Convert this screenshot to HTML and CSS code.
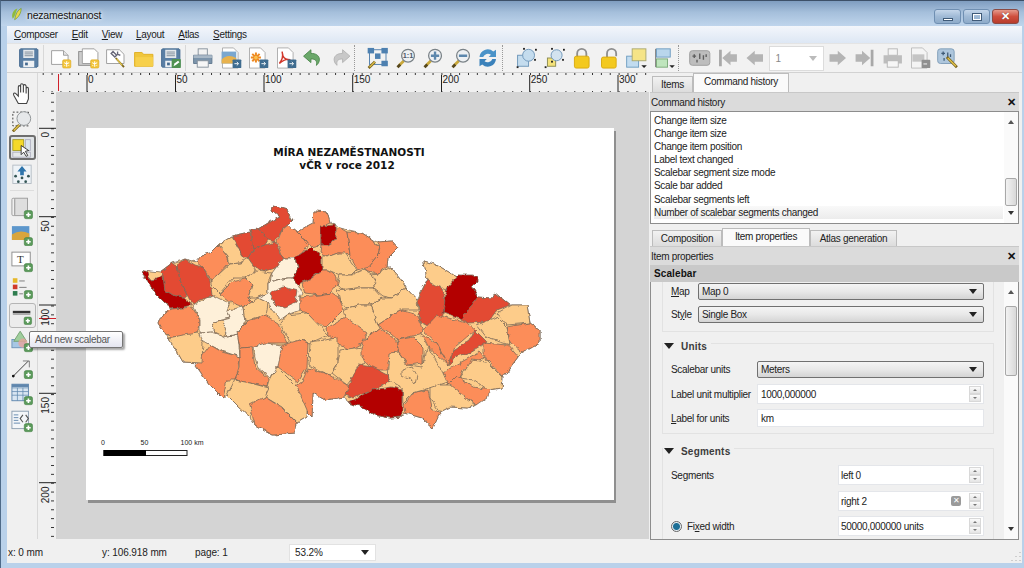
FILE: index.html
```html
<!DOCTYPE html>
<html lang="en">
<head>
<meta charset="utf-8">
<title>nezamestnanost</title>
<link rel="stylesheet" href="styles.css">
</head>
<body>
<svg class="defs" width="0" height="0">
<defs>
<filter id="wig" x="-5%" y="-5%" width="110%" height="110%" color-interpolation-filters="sRGB"><feTurbulence type="fractalNoise" baseFrequency=".16" numOctaves="2" seed="4"/><feDisplacementMap in="SourceGraphic" scale="4.500" xChannelSelector="R" yChannelSelector="G"/></filter>
<g id="badge"><rect x="14" y="14" width="9" height="9" rx="1.5" fill="#f3c53b" stroke="#d8a520" stroke-width=".6"/><path d="M18.5 15.5v6M15.8 17l5.4 3M21.2 17l-5.4 3" stroke="#fff" stroke-width="1.1"/></g>
<g id="plus"><rect x="14.5" y="14.5" width="9" height="9" rx="2" fill="#5b9a5b" stroke="#3f7c3f" stroke-width=".6"/><path d="M19 16.5v5M16.5 19h5" stroke="#fff" stroke-width="1.8"/></g>
<g id="exp"><rect x="14" y="13.5" width="9.5" height="9.5" rx="1" fill="#3f6c8f"/><path d="M16 18.2h4M18.6 16.3l2 1.9-2 1.9" fill="none" stroke="#fff" stroke-width="1"/></g>
<g id="lens"><path d="M5 20 10 15" stroke="#c9a83a" stroke-width="3"/><path d="M3 22 6 19" stroke="#56471b" stroke-width="3"/><circle cx="14.5" cy="9.5" r="7" fill="#eef1f4" stroke="#7b8388" stroke-width="1.4"/></g>
<symbol id="i-save" viewBox="0 0 24 24"><path d="M3 2h18l1 1v18l-1 1H3l-1-1V3z" fill="#5a7fa5" stroke="#456a90"/><rect x="6" y="3" width="12" height="9" fill="#e4e8ec"/><path d="M7.5 5.5h9M7.5 7.5h9M7.5 9.5h9" stroke="#7d8b99"/><rect x="6" y="15" width="12" height="7" fill="#eef1f4"/><rect x="8" y="17" width="3" height="3" fill="#456a90"/></symbol>
<symbol id="i-new" viewBox="0 0 24 24"><path d="M2 4h13l5 5v10H2z" fill="#fff" stroke="#9a9a9a"/><path d="M15 4v5h5" fill="#e4e4e4" stroke="#9a9a9a"/><use href="#badge"/></symbol>
<symbol id="i-dup" viewBox="0 0 24 24"><rect x="1" y="5" width="15" height="15" fill="#ccc" stroke="#8a8a8a"/><path d="M5 2h13l4 4v12H5z" fill="#fff" stroke="#9a9a9a"/><use href="#badge"/></symbol>
<symbol id="i-man" viewBox="0 0 24 24"><path d="M2 3h14l5 5v10H2z" fill="#fff" stroke="#9a9a9a"/><path d="M9 5l4 4-2 2-4-4zM14 5v3l3 1" fill="none" stroke="#667" stroke-width="1.5"/><path d="M12 12l9 10" stroke="#7a6420" stroke-width="2"/><path d="M13 13l6 7" stroke="#e4c64a" stroke-width="1.4"/></symbol>
<symbol id="i-open" viewBox="0 0 24 24"><path d="M2 6h8l2 2h10v13H2z" fill="#f0c63c" stroke="#e0ae20"/><rect x="3" y="11" width="19" height="10" fill="#f7d04b"/></symbol>
<symbol id="i-saveas" viewBox="0 0 24 24"><use href="#i-save" width="24" height="24"/><rect x="13" y="13" width="10" height="10" rx="1" fill="#4f9150"/><path d="M15 21l1-3 4-3 1.5 1.5-4 3z" fill="#fff"/></symbol>
<symbol id="i-print" viewBox="0 0 24 24"><rect x="7" y="2" width="10" height="7" fill="#f2f2f2" stroke="#85909b"/><path d="M2 9h20v9H2z" fill="#7c94ab" stroke="#60788f"/><rect x="2" y="9" width="20" height="3" fill="#a9b8c6"/><rect x="6" y="15" width="12" height="7" fill="#f6f6f6" stroke="#85909b"/></symbol>
<symbol id="i-img" viewBox="0 0 24 24"><path d="M3 1h12l5 5v17H3z" fill="#fff" stroke="#aaa"/><rect x="2" y="5" width="16" height="13" fill="#7aa7cf"/><path d="M2 14q6-7 16-2v6H2z" fill="#e8b24d"/><use href="#exp"/></symbol>
<symbol id="i-svg" viewBox="0 0 24 24"><path d="M3 1h12l5 5v17H3z" fill="#fff" stroke="#aaa"/><g stroke="#ee8a22" stroke-width="2.2"><path d="M10 6v11M4.500 11.500h11M6 7.500l8 8M14 7.500l-8 8"/></g><circle cx="10" cy="11.500" r="2" fill="#f9c04d"/><use href="#exp"/></symbol>
<symbol id="i-pdf" viewBox="0 0 24 24"><path d="M3 1h12l5 5v17H3z" fill="#fff" stroke="#aaa"/><path d="M8 5q2 7-3 13 7-6 12-4-6 0-8-4z" fill="none" stroke="#d1382c" stroke-width="1.6"/><use href="#exp"/></symbol>
<symbol id="i-undo" viewBox="0 0 24 24"><path d="M10 3 2 10l8 7v-4c5 0 7 2 6 7 5-4 5-13-6-13z" fill="#6ba86a" stroke="#4c884c"/></symbol>
<symbol id="i-redo" viewBox="0 0 24 24"><path d="M14 3l8 7-8 7v-4c-5 0-7 2-6 7-5-4-5-13 6-13z" fill="#c8c8c8" stroke="#b4b4b4"/></symbol>
<symbol id="i-zfull" viewBox="0 0 24 24"><rect x="3" y="3" width="18" height="16" fill="none" stroke="#4c7cab" stroke-width="1"/><g fill="#4d80b0"><rect x="1" y="1" width="7" height="6"/><rect x="16" y="1" width="7" height="6"/><rect x="16" y="15" width="7" height="6"/><rect x="9" y="7" width="6" height="6"/></g><path d="M2 23l7-7" stroke="#7a6420" stroke-width="3"/><path d="M3 22l6-6" stroke="#e4c64a" stroke-width="1.4"/></symbol>
<symbol id="i-z11" viewBox="0 0 24 24"><use href="#lens"/><text x="14.500" y="12.500" class="ztext">1:1</text></symbol>
<symbol id="i-zin" viewBox="0 0 24 24"><use href="#lens"/><path d="M14.500 5v9M10 9.500h9" stroke="#5c87ad" stroke-width="2.600"/></symbol>
<symbol id="i-zout" viewBox="0 0 24 24"><use href="#lens"/><path d="M10 9.500h9" stroke="#5c87ad" stroke-width="2.600"/></symbol>
<symbol id="i-ref" viewBox="0 0 24 24"><path d="M3 11a9 9 0 0 1 15-6l3-2v8h-8l2.500-2.500A5.500 5.500 0 0 0 7 11z" fill="#4b93c8"/><path d="M21 13a9 9 0 0 1-15 6l-3 2v-8h8l-2.500 2.500A5.500 5.500 0 0 0 17 13z" fill="#3b82bb"/></symbol>
<symbol id="i-group" viewBox="0 0 24 24"><rect x="2" y="9" width="12" height="12" fill="#c4dcee" stroke="#6b94b8"/><circle cx="14" cy="9" r="6.500" fill="#c4dcee" stroke="#6b94b8"/><g fill="#222"><rect x="1" y="21" width="2" height="2"/><rect x="21" y="2" width="2" height="2"/><rect x="8" y="1" width="2" height="2"/><rect x="20" y="13" width="2" height="2"/></g></symbol>
<symbol id="i-ungroup" viewBox="0 0 24 24"><rect x="4" y="12" width="9" height="9" fill="#f4e27a" stroke="#8a8a50"/><circle cx="14" cy="9" r="6" fill="#d3e3ef" stroke="#6b94b8"/><g fill="#222"><rect x="1" y="21" width="2" height="2"/><rect x="21" y="2" width="2" height="2"/><rect x="8" y="1" width="2" height="2"/><rect x="20" y="13" width="2" height="2"/><rect x="8" y="15" width="2" height="2"/></g></symbol>
<symbol id="i-lock" viewBox="0 0 24 24"><path d="M7 11V7a5 5 0 0 1 10 0v4" fill="none" stroke="#8e8e8e" stroke-width="2"/><rect x="4" y="10" width="16" height="13" rx="2" fill="#f3c91f" stroke="#d9a90d"/></symbol>
<symbol id="i-unlock" viewBox="0 0 24 24"><path d="M9 11V7a5 5 0 0 1 10 0v3" fill="none" stroke="#8e8e8e" stroke-width="2"/><rect x="3" y="11" width="16" height="12" rx="2" fill="#f3c91f" stroke="#d9a90d"/></symbol>
<symbol id="i-raise" viewBox="0 0 24 24"><rect x="1" y="10" width="13" height="12" fill="#c2dcf0" stroke="#6d9cc0"/><rect x="7" y="2" width="15" height="13" fill="#f5e487" stroke="#a9a770"/><path d="M17 20h6l-3 3z" fill="#222"/></symbol>
<symbol id="i-align" viewBox="0 0 24 24"><path d="M2 2v20" stroke="#777"/><rect x="3" y="2" width="15" height="9" fill="#b9d6ec" stroke="#6d9cc0"/><rect x="3" y="13" width="12" height="9" fill="#bfe5bd" stroke="#79a877"/><path d="M17 20h6l-3 3z" fill="#222"/></symbol>
<symbol id="i-atlas" viewBox="0 0 24 24"><rect x="1" y="4" width="22" height="16" rx="3" fill="#bdbdbd" stroke="#9d9d9d"/><path d="M6 8v4M4 10h4M12 7v6M16 9v5M19 8v3M9 14v3" stroke="#5e5e5e" stroke-width="1.500"/></symbol>
<symbol id="i-first" viewBox="0 0 24 24"><path d="M4 3v18" stroke="#a8a8a8" stroke-width="3"/><path d="M6 12l9-8v4h7v8h-7v4z" fill="#b4b4b4"/></symbol>
<symbol id="i-prev" viewBox="0 0 24 24"><path d="M3 12l9-8v4h9v8h-9v4z" fill="#b4b4b4"/></symbol>
<symbol id="i-next" viewBox="0 0 24 24"><path d="M21 12l-9-8v4H3v8h9v4z" fill="#b4b4b4"/></symbol>
<symbol id="i-last" viewBox="0 0 24 24"><path d="M20 3v18" stroke="#a8a8a8" stroke-width="3"/><path d="M18 12l-9-8v4H2v8h7v4z" fill="#b4b4b4"/></symbol>
<symbol id="i-gprint" viewBox="0 0 24 24"><rect x="7" y="2" width="10" height="7" fill="#f5f5f5" stroke="#b5b5b5"/><path d="M2 9h20v9H2z" fill="#bdbdbd"/><rect x="6" y="15" width="12" height="7" fill="#f6f6f6" stroke="#b5b5b5"/></symbol>
<symbol id="i-gexp" viewBox="0 0 24 24"><path d="M3 1h12l5 5v17H3z" fill="#f4f4f4" stroke="#bbb"/><rect x="4" y="8" width="13" height="8" fill="#c4c4c4"/><rect x="14" y="14" width="9.500" height="9" rx="1" fill="#8f8f8f"/><path d="M16 18.500h4" stroke="#fff"/></symbol>
<symbol id="i-asett" viewBox="0 0 24 24"><rect x="1" y="2" width="18" height="16" rx="3" fill="#aec6dc" stroke="#7f9cb8"/><path d="M5 7h4M7 5v4M12 6v6M15 8v3M8 12v3" stroke="#3f5a75" stroke-width="1.400"/><path d="M11 11l11 11" stroke="#7a6420" stroke-width="3"/><path d="M12 12l9 9" stroke="#e4c64a" stroke-width="1.400"/></symbol>
<symbol id="i-hand" viewBox="0 0 24 24"><path d="M8 22 3 13c-1-2 1-3 2-2l3 3V4c0-2 2-2 2.500 0v6-8c0-2 2.500-2 3 0v8-7c0-2 2.500-2 3 0v8-5c0-2 2.500-2 2.500 0v11l-2 5z" fill="#fff" stroke="#444" stroke-width="1.200"/></symbol>
<symbol id="i-zoom" viewBox="0 0 24 24"><rect x="2" y="2" width="17" height="15" fill="none" stroke="#333" stroke-dasharray="2 2"/><circle cx="14" cy="9" r="7.500" fill="#e6e8ea" stroke="#8b8f92"/><path d="M2 23l7-7" stroke="#7a6420" stroke-width="3"/><path d="M3 22l6-6" stroke="#e4c64a" stroke-width="1.400"/></symbol>
<symbol id="i-sel" viewBox="0 0 24 24"><rect x="1" y="2" width="13" height="13" fill="#f5d92a" stroke="#a09820"/><rect x="16" y="2" width="6" height="13" fill="#dbe6ee" stroke="#aab"/><rect x="1" y="17" width="21" height="6" fill="#e4e7e9" stroke="#aab"/><path d="M11 9l0 11 3-3 3 5 2-1-3-5 4-1z" fill="#fff" stroke="#222"/></symbol>
<symbol id="i-move" viewBox="0 0 24 24"><rect x="2" y="2" width="20" height="20" fill="#eef3f7" stroke="#b4bcc4"/><path d="M12 3l-5 6h3v4h4V9h3z" fill="#2e74ab"/><g fill="#355"><circle cx="5" cy="14" r="1.500"/><circle cx="19" cy="14" r="1.500"/><circle cx="8" cy="20" r="1.500"/><circle cx="16" cy="20" r="1.500"/><circle cx="12" cy="16" r="1.500"/></g></symbol>
<symbol id="a-map" viewBox="0 0 24 24"><rect x="4" y="1" width="14" height="19" fill="#dedede" stroke="#9a9a9a"/><rect x="1" y="1" width="3" height="19" rx="1.500" fill="#f0f0f0" stroke="#9a9a9a"/><use href="#plus"/></symbol>
<symbol id="a-pic" viewBox="0 0 24 24"><rect x="1" y="2" width="19" height="15" fill="#5d97cc"/><path d="M1 11q9-6 19-1v7H1z" fill="#d8a53c"/><use href="#plus"/></symbol>
<symbol id="a-lbl" viewBox="0 0 24 24"><rect x="1" y="2" width="20" height="15" fill="#fff" stroke="#8a8a8a"/><text x="10" y="14" class="ltext">T</text><use href="#plus"/></symbol>
<symbol id="a-leg" viewBox="0 0 24 24"><rect x="2" y="1" width="5" height="5" fill="#e6b82a"/><rect x="2" y="8" width="5" height="5" fill="#d0392a"/><rect x="2" y="15" width="5" height="5" fill="#2f7d4f"/><path d="M9 4h6M9 11h8M9 18h4" stroke="#777"/><use href="#plus"/></symbol>
<symbol id="a-sb" viewBox="0 0 24 24"><rect x="1" y="7" width="21" height="3" fill="#333"/><rect x="1" y="10" width="21" height="2" fill="#aaa"/><use href="#plus"/></symbol>
<symbol id="a-shape" viewBox="0 0 24 24"><rect x="1" y="10" width="14" height="9" fill="#a7c7e4" stroke="#6c93b8"/><path d="M10 1l7 11H3z" fill="#9fce9c" stroke="#72a070"/><circle cx="13" cy="14" r="5" fill="#e7a49c" opacity=".8"/><use href="#plus"/></symbol>
<symbol id="a-arrow" viewBox="0 0 24 24"><path d="M2 21 19 4" stroke="#333"/><path d="M13 4h7v7" fill="none" stroke="#777"/><circle cx="2.500" cy="20.500" r="1.500" fill="#111"/><use href="#plus"/></symbol>
<symbol id="a-tab" viewBox="0 0 24 24"><rect x="1" y="1" width="18" height="18" fill="#d9e6f2" stroke="#5f86ad"/><path d="M1 5h18M1 9h18M1 13h18M7 5v14M13 5v14" stroke="#5f86ad" stroke-width=".8"/><rect x="1" y="1" width="18" height="3" fill="#5f86ad"/><use href="#plus"/></symbol>
<symbol id="a-html" viewBox="0 0 24 24"><rect x="1" y="1" width="18" height="19" fill="#f3f6f9" stroke="#8a9db0"/><path d="M3 5h5M3 8h5M3 11h5M3 14h7" stroke="#5f86ad"/><path d="M13 5l-3 4 3 4M16 5l3 4-3 4" fill="none" stroke="#555" stroke-width="1.200"/><use href="#plus"/></symbol>
<symbol id="i-leaf" viewBox="0 0 16 16"><path d="M4 13C2 8 5 3 9 2 7 6 7 10 4 13z" fill="#8fbb3a"/><path d="M6 14c4-2 7-7 7-12-4 2-6 6-7 12z" fill="#e9d74a" stroke="#6b9a2a" stroke-width=".7"/></symbol>
<pattern id="tickx" x="87" width="8.860" height="19" patternUnits="userSpaceOnUse"><rect width="1" height="3" y="15" fill="#333"/></pattern>
<pattern id="ticky" y="128.300" width="18" height="8.860" patternUnits="userSpaceOnUse"><rect width="3" height="1" x="15" fill="#333"/></pattern>
</defs>
</svg>

<div class="window">
  <header class="titlebar">
    <svg class="appicon"><use href="#i-leaf"/></svg>
    <span class="apptitle">nezamestnanost</span>
    <div class="winbtns">
      <span class="winbtn"><i class="glyph-min"></i></span>
      <span class="winbtn"><i class="glyph-max"></i></span>
      <span class="winbtn close"><i class="glyph-x">✕</i></span>
    </div>
  </header>
  <div class="inner">
    <nav class="menu">
      <span><u>C</u>omposer</span><span><u>E</u>dit</span><span><u>V</u>iew</span><span><u>L</u>ayout</span><span><u>A</u>tlas</span><span><u>S</u>ettings</span>
    </nav>
    <div class="toolbar">
      <svg class="tool"><use href="#i-save"/></svg>
      <i class="sep s-a"></i>
      <svg class="tool"><use href="#i-new"/></svg>
      <svg class="tool"><use href="#i-dup"/></svg>
      <svg class="tool"><use href="#i-man"/></svg>
      <svg class="tool"><use href="#i-open"/></svg>
      <svg class="tool"><use href="#i-saveas"/></svg>
      <i class="sep s-a"></i>
      <svg class="tool"><use href="#i-print"/></svg>
      <svg class="tool"><use href="#i-img"/></svg>
      <svg class="tool"><use href="#i-svg"/></svg>
      <svg class="tool"><use href="#i-pdf"/></svg>
      <svg class="tool"><use href="#i-undo"/></svg>
      <svg class="tool"><use href="#i-redo"/></svg>
      <i class="sep s-c"></i>
      <svg class="tool"><use href="#i-zfull"/></svg>
      <svg class="tool"><use href="#i-z11"/></svg>
      <svg class="tool"><use href="#i-zin"/></svg>
      <svg class="tool"><use href="#i-zout"/></svg>
      <svg class="tool"><use href="#i-ref"/></svg>
      <i class="sep s-d"></i>
      <svg class="tool"><use href="#i-group"/></svg>
      <svg class="tool"><use href="#i-ungroup"/></svg>
      <svg class="tool"><use href="#i-lock"/></svg>
      <svg class="tool"><use href="#i-unlock"/></svg>
      <svg class="tool"><use href="#i-raise"/></svg>
      <svg class="tool"><use href="#i-align"/></svg>
      <i class="sep s-e"></i>
      <svg class="tool"><use href="#i-atlas"/></svg>
      <svg class="tool"><use href="#i-first"/></svg>
      <svg class="tool"><use href="#i-prev"/></svg>
      <div class="pagebox"><span>1</span><i class="caret grey"></i></div>
      <svg class="tool"><use href="#i-next"/></svg>
      <svg class="tool"><use href="#i-last"/></svg>
      <svg class="tool"><use href="#i-gprint"/></svg>
      <svg class="tool"><use href="#i-gexp"/></svg>
      <svg class="tool"><use href="#i-asett"/></svg>
    </div>
    <main class="main">
      <aside class="lefttools">
        <svg class="ltool"><use href="#i-hand"/></svg>
        <svg class="ltool"><use href="#i-zoom"/></svg>
        <div class="lbox on"><svg class="ltool"><use href="#i-sel"/></svg></div>
        <svg class="ltool"><use href="#i-move"/></svg>
        <i class="lsep"></i>
        <svg class="ltool"><use href="#a-map"/></svg>
        <svg class="ltool"><use href="#a-pic"/></svg>
        <svg class="ltool"><use href="#a-lbl"/></svg>
        <svg class="ltool"><use href="#a-leg"/></svg>
        <div class="lbox"><svg class="ltool"><use href="#a-sb"/></svg></div>
        <svg class="ltool"><use href="#a-shape"/></svg>
        <svg class="ltool"><use href="#a-arrow"/></svg>
        <svg class="ltool"><use href="#a-tab"/></svg>
        <svg class="ltool"><use href="#a-html"/></svg>
      </aside>
      <section class="center">
        <svg class="hruler" viewBox="38 73 611 19">
          <rect x="38" y="73" width="611" height="19" fill="url(#tickx)"/>
          <path d="M87 75v17M175.500 75v17M264 75v17M352.700 75v17M441.500 75v17M529.700 75v17M618 75v17" stroke="#222"/>
          <path d="M58.500 74v17" stroke="#d0202a"/>
          <g class="rtext"><text x="88" y="83">0</text><text x="176.500" y="83">50</text><text x="265" y="83">100</text><text x="353.700" y="83">150</text><text x="442.500" y="83">200</text><text x="530.700" y="83">250</text><text x="619" y="83">300</text></g>
        </svg>
        <div class="below">
          <svg class="vruler" viewBox="38 92 18 447">
            <rect x="38" y="92" width="18" height="447" fill="url(#ticky)"/>
            <path d="M39 128.300h17M39 216.700h17M39 305h17M39 393.300h17M39 482.700h17" stroke="#222"/>
            <path d="M39 318.500h17" stroke="#d0202a"/>
            <g class="rtext rv"><text transform="translate(49 132) rotate(-90)">0</text><text transform="translate(49 220.500) rotate(-90)">50</text><text transform="translate(49 309) rotate(-90)">100</text><text transform="translate(49 397) rotate(-90)">150</text><text transform="translate(49 486.500) rotate(-90)">200</text></g>
          </svg>
          <div class="canvas">
            <svg class="paper" viewBox="86 128 528 372">
              <g class="ptitle"><text x="349" y="156">MÍRA NEZAMĚSTNANOSTI</text><text x="347" y="169">vČR v roce 2012</text></g>
              <g class="map">
                <polygon class="c2" points="144,270 160,272 172,263 185,259 196,262 202,255 210,253 218,245 227,240 232,237 250,233 250,229 259,229 272,221 280,217 272,210 273,206 287,210 293,220 288,225 297,232 313,223 314,211 327,212 330,223 335,225 340,228 362,233 373,240 377,242 392,241 398,248 388,258 387,267 391,267 400,278 406,288 417,300 427,280 424,261 437,265 457,277 458,275 477,278 472,287 478,297 492,298 495,293 510,305 527,305 530,323 540,330 540,343 522,353 518,357 503,377 502,388 490,390 477,405 467,408 450,407 440,412 433,428 422,418 405,413 402,417 390,418 375,415 363,407 348,403 345,397 325,400 313,393 312,417 303,408 307,417 297,423 295,433 273,435 255,425 250,417 237,405 227,395 223,398 210,385 195,365 202,363 183,362 175,348 168,338 159,323 163,313 173,309 165,303 155,293 150,285 143,276"/>
                <polygon class="c5" points="144,270 147,272 150,280 157,279 163,275 165,290 173,295 183,297 192,305 175,309 165,303 155,293 150,285 143,276"/>
                <polygon class="c4" points="160,272 172,263 177,265 180,280 187,295 183,297 173,295 165,290 163,275"/>
                <polygon class="c4" points="177,264 185,259 195,265 202,267 210,280 212,295 203,298 193,304 187,295 180,280"/>
                <polygon class="c3" points="196,262 202,255 210,253 218,245 228,257 229,263 218,275 212,281 202,267"/>
                <polygon class="c2" points="218,245 227,240 232,237 238,247 243,258 240,263 230,264 228,257"/>
                <polygon class="c4" points="233,237 250,233 254,248 248,258 243,258 238,247"/>
                <polygon class="c4" points="250,229 258,228 268,240 265,245 254,249"/>
                <polygon class="c4" points="259,229 272,221 280,217 272,210 273,206 287,210 290,217 293,220 282,230 275,242 268,240"/>
                <polygon class="c4" points="254,249 265,245 275,242 283,258 278,267 263,272 253,265 248,258"/>
                <polygon class="c2" points="230,264 240,263 248,258 253,265 256,271 245,278 233,278 220,293 212,285 212,280 218,275"/>
                <polygon class="c3" points="232,282 245,279 252,285 248,298 252,302 243,307 230,302 220,294"/>
                <polygon class="c2" points="245,278 256,271 272,273 268,283 268,293 257,298 248,298 252,285"/>
                <polygon class="c3" points="277,242 282,230 288,225 297,232 302,237 308,245 303,252 295,258 283,258"/>
                <polygon class="c1" points="272,273 283,258 295,258 298,267 293,278 287,278 277,280 270,283"/>
                <polygon class="c1" points="268,283 277,280 287,278 293,278 298,285 302,293 300,297 300,310 287,315 280,320 268,303 258,298 268,293"/>
                <polygon class="c4" points="270,293 283,287 298,291 296,303 285,308 275,305"/>
                <polygon class="c5" points="295,258 303,252 312,247 322,258 322,270 312,278 302,282 298,285 293,278 298,267"/>
                <polygon class="c3" points="297,232 307,226 313,223 314,211 327,212 330,223 321,227 321,245 312,247 308,245 302,237"/>
                <polygon class="c5" points="321,226 335,225 336,240 328,245 321,245"/>
                <polygon class="c3" points="336,229 340,228 347,232 349,247 350,255 338,253 327,257 320,252 321,245 328,245 336,240"/>
                <polygon class="c3" points="347,232 362,233 373,240 375,245 380,247 378,255 368,267 358,270 350,255 349,247"/>
                <polygon class="c3" points="377,242 392,241 398,248 388,258 387,267 378,274 368,272 363,270 368,267 378,255 380,247"/>
                <polygon class="c2" points="322,255 327,257 338,253 345,253 357,270 352,275 340,275 328,270 322,270"/>
                <polygon class="c2" points="340,275 352,275 363,270 375,277 377,283 373,288 357,288 345,290 337,285"/>
                <polygon class="c2" points="372,275 378,274 391,267 400,278 406,288 392,298 383,296 373,288 377,283"/>
                <polygon class="c2" points="337,290 357,288 373,288 382,298 370,305 360,305 348,308 340,302"/>
                <polygon class="c3" points="302,283 312,278 322,270 328,270 337,277 337,285 330,293 320,295 305,293"/>
                <polygon class="c3" points="300,297 320,295 331,293 338,298 343,310 325,328 313,320 307,313 300,310"/>
                <polygon class="c2" points="343,310 348,308 360,305 370,305 378,325 380,328 362,342 345,317"/>
                <polygon class="c2" points="382,298 392,298 406,288 417,300 418,310 400,310 378,325 370,305"/>
                <polygon class="c3" points="159,323 163,313 173,309 192,307 200,320 200,327 197,333 183,337 170,337 163,330"/>
                <polygon class="c1" points="193,305 212,295 222,300 230,303 227,310 230,318 222,320 212,322 215,332 200,333 200,320"/>
                <polygon class="c1" points="200,333 212,332 228,337 238,335 240,357 222,351 210,345 198,338"/>
                <polygon class="c2" points="212,322 222,320 227,333 225,337 215,332"/>
                <polygon class="c1" points="227,310 243,307 245,322 238,335 228,337 222,320 230,318"/>
                <polygon class="c2" points="243,307 252,302 258,298 268,303 266,315 255,318 245,322"/>
                <polygon class="c3" points="237,332 247,322 265,315 278,323 288,343 267,343 253,347 240,348"/>
                <polygon class="c2" points="280,323 287,315 307,313 328,335 310,343 300,340 292,345"/>
                <polygon class="c3" points="327,328 345,317 367,333 362,343 350,350 338,343 328,335"/>
                <polygon class="c1" points="253,347 265,343 282,345 280,365 270,378 258,368 255,357"/>
                <polygon class="c3" points="240,348 252,347 255,367 269,379 268,387 250,383 235,380 240,367"/>
                <polygon class="c3" points="195,365 210,345 222,352 240,357 239,367 235,380 227,380 223,398 210,385"/>
                <polygon class="c2" points="168,338 183,335 198,333 203,343 202,363 183,362 175,348"/>
                <polygon class="c3" points="282,345 300,340 308,343 307,368 298,382 278,367"/>
                <polygon class="c2" points="310,342 338,338 338,363 330,375 317,370 309,365"/>
                <polygon class="c2" points="340,350 362,347 365,362 353,377 347,385 332,373 338,363"/>
                <polygon class="c3" points="308,368 330,375 347,385 350,390 345,397 325,400 313,393 312,417 303,408 293,387 302,382"/>
                <polygon class="c2" points="277,367 297,387 307,410 307,417 297,423 282,407 265,397 270,380"/>
                <polygon class="c2" points="227,395 235,380 250,383 269,388 265,397 258,403 250,417 237,405"/>
                <polygon class="c3" points="250,405 265,397 282,408 297,423 295,433 273,435 255,425"/>
                <polygon class="c3" points="378,325 400,310 418,315 423,333 398,340 390,333"/>
                <polygon class="c3" points="362,342 380,328 398,342 397,353 388,362 388,370 373,370 362,357"/>
                <polygon class="c4" points="418,300 427,280 443,288 445,303 442,320 430,327 420,322"/>
                <polygon class="c2" points="424,261 437,265 457,277 447,290 435,285 427,280"/>
                <polygon class="c5" points="447,287 458,275 472,275 477,278 477,282 472,287 478,297 468,310 463,320 443,313"/>
                <polygon class="c4" points="478,297 492,298 495,293 510,305 497,310 488,322 468,323 462,320 468,310"/>
                <polygon class="c2" points="512,305 527,305 530,323 507,325 497,313"/>
                <polygon class="c2" points="477,325 497,317 507,327 510,345 487,338"/>
                <polygon class="c3" points="507,327 530,323 540,330 540,343 522,353 510,342"/>
                <polygon class="c4" points="475,330 487,342 470,352 455,357 450,365 448,357 455,350 470,340"/>
                <polygon class="c3" points="483,343 508,345 518,357 503,377 487,360 483,352"/>
                <polygon class="c3" points="452,367 480,352 485,358 463,370 460,378 447,385 443,373"/>
                <polygon class="c2" points="460,378 472,360 487,362 503,378 502,388 487,390 473,380"/>
                <polygon class="c3" points="448,385 457,376 473,387 490,390 487,398 477,405 453,390"/>
                <polygon class="c2" points="430,385 450,385 475,405 467,408 450,407 440,412 430,398"/>
                <polygon class="c3" points="403,405 415,392 428,390 432,408 440,413 433,428 422,418 405,413"/>
                <polygon class="c2" points="390,353 398,352 407,365 423,367 425,353 428,347 443,373 447,382 423,390 413,393 403,403 402,388 388,380"/>
                <polygon class="c2" points="402,370 412,367 417,375 415,383 408,378 402,375"/>
                <polygon class="c3" points="398,340 413,337 423,347 423,363 408,365 398,352"/>
                <polygon class="c3" points="423,330 437,315 467,323 475,330 455,347 448,365 437,343"/>
                <polygon class="c3" points="422,335 437,343 448,365 428,347"/>
                <polygon class="c4" points="345,395 358,365 373,367 388,375 390,382 373,390 353,398"/>
                <polygon class="c5" points="348,403 373,390 392,387 402,390 402,417 390,418 375,415 363,407"/>
              </g>
              <g class="sbtext"><text x="103" y="445">0</text><text x="144.500" y="445">50</text><text x="192" y="445">100 km</text></g>
              <rect x="104" y="450.500" width="83" height="5" class="sbw"/>
              <rect x="104" y="450.500" width="41.500" height="5" class="sbb"/>
            </svg>
          </div>
        </div>
      </section>
      <aside class="right">
        <div class="tabs">
          <span class="tab t-items">Items</span>
          <span class="tab on t-hist">Command history</span>
        </div>
        <div class="dockhead"><span>Command history</span><b>✕</b></div>
        <div class="list">
          <ul>
            <li>Change item size</li><li>Change item size</li><li>Change item position</li><li>Label text changed</li><li>Scalebar segment size mode</li><li>Scale bar added</li><li>Scalebar segments left</li><li class="cur">Number of scalebar segments changed</li>
          </ul>
          <div class="vscroll h-list"><i class="up"></i><i class="thumb"></i><i class="dn"></i></div>
        </div>
        <div class="tabs t2">
          <span class="tab t-comp">Composition</span>
          <span class="tab on t-prop">Item properties</span>
          <span class="tab t-atlas">Atlas generation</span>
        </div>
        <div class="dockhead"><span>Item properties</span><b>✕</b></div>
        <div class="subhead">Scalebar</div>
        <div class="propbody">
          <div class="props">
            <div class="group first">
              <div class="row r-main"><label class="l-short"><u>M</u>ap</label><div class="combo">Map 0<i class="caret"></i></div></div>
              <div class="row r-main"><label class="l-short">St<u>y</u>le</label><div class="combo">Single Box<i class="caret"></i></div></div>
            </div>
            <div class="group">
              <div class="legend"><i class="tri"></i>Units</div>
              <div class="row u1"><label class="l-mid">Scalebar units</label><div class="combo">Meters<i class="caret"></i></div></div>
              <div class="row u2"><label class="l-mid">Label unit multiplier</label><div class="input">1000,000000<span class="spin"><i></i><i></i></span></div></div>
              <div class="row u3"><label class="l-mid"><u>L</u>abel for units</label><div class="input">km</div></div>
            </div>
            <div class="group last">
              <div class="legend"><i class="tri"></i>Segments</div>
              <div class="row s1"><label class="l-long">Segments</label><div class="input">left 0<span class="spin"><i></i><i></i></span></div></div>
              <div class="row s1"><label class="l-long"></label><div class="input">right 2<em class="clear">✕</em><span class="spin"><i></i><i></i></span></div></div>
              <div class="row s1 s-fixed"><label class="l-long"><i class="radio"></i>Fi<u>x</u>ed width</label><div class="input">50000,000000 units<span class="spin"><i></i><i></i></span></div></div>
            </div>
          </div>
          <div class="vscroll"><i class="up"></i><i class="thumb t-prop-thumb"></i><i class="dn"></i></div>
        </div>
      </aside>
    </main>
    <footer class="status">
      <span class="st-x">x: 0 mm</span><span class="st-y">y: 106.918 mm</span><span class="st-p">page: 1</span>
      <div class="zoomcombo">53.2%<i class="caret"></i></div>
      <svg class="grip" viewBox="0 0 12 12"><path d="M10 2v1M10 6v1M10 10v1M6 6v1M6 10v1M2 10v1" stroke="#aaa"/></svg>
    </footer>
  </div>
  <div class="tooltip">Add new scalebar</div>
</div>
</body>
</html>
```

FILE: styles.css
```css
* { box-sizing: border-box; }
html, body { margin: 0; padding: 0; }
body { width: 1024px; height: 568px; overflow: hidden; font-family: "Liberation Sans", Arial, sans-serif; font-size: 10px; letter-spacing: -0.3px; color: #222; background: #b9d1ea; }
.defs { position: absolute; }
.window { position: relative; width: 1024px; height: 568px; display: flex; flex-direction: column; border-left: 1px solid #4e6a88; border-top: 1px solid #3d5068; background: #b9d1ea; }
i, em { font-style: normal; }

.titlebar { height: 25px; flex: none; display: flex; align-items: center; padding-left: 8px; background: linear-gradient(#7f9dc0, #a5bfdb 45%, #bfd5ec); }
.appicon { width: 15px; height: 16px; margin-top: 1px; }
.apptitle { margin: 3px 0 0 3px; font-size: 10.500px; letter-spacing: -0.2px; color: #111; text-shadow: 0 0 6px #fff, 0 0 3px #fff; }
.winbtns { margin-left: auto; display: flex; gap: 2px; margin-right: 5px; margin-top: 6px; }
.winbtn { width: 27px; height: 15px; border: 1px solid #6f8fb2; border-radius: 3px; background: linear-gradient(#c4d6ea, #a0bad6 50%, #8eabc9); display: flex; align-items: center; justify-content: center; }
.winbtn.close { background: linear-gradient(#e59a8c, #cf4f3e 50%, #b83c2c); border-color: #8a4a44; }
.glyph-min { width: 10px; height: 3px; background: #fff; border: 1px solid #3f5a78; margin-top: 5px; }
.glyph-max { width: 10px; height: 8px; border: 2px solid #fff; outline: 1px solid #3f5a78; outline-offset: -1px; }
.glyph-x { color: #fff; font-size: 11px; font-weight: bold; line-height: 1; text-shadow: 0 0 1px #522; }

.inner { flex: 1; min-height: 0; display: flex; flex-direction: column; margin: 0 2px 5px 6px; background: #f0f0f0; }
.menu { height: 17px; flex: none; display: flex; gap: 14px; padding-left: 7px; align-items: center; background: linear-gradient(#f3f6fb, #dde7f4); color: #1c1c1c; }
.toolbar { height: 30px; flex: none; display: flex; align-items: center; padding-left: 8px; background: #f2f2f2; border-top: 1px solid #e4e4e4; border-bottom: 1px solid #d2d2d2; }
.tool { width: 27.500px; height: 24px; flex: none; padding: 1px 2.500px; }
.sep { flex: none; height: 26px; border-left: 1px solid #d8d8d8; }
.s-a { width: 4.500px; }
.s-c { width: 10px; border-left-style: dotted; border-left-color: #999; margin-left: 0; }
.s-d { width: 11.500px; border-left-style: dotted; border-left-color: #999; }
.s-e { width: 8px; border-left-style: dotted; border-left-color: #999; }
.pagebox { width: 55px; height: 25px; flex: none; border: 1px solid #dcdcdc; background: #fff; display: flex; align-items: center; padding-left: 6px; color: #888; position: relative; }
.caret { width: 0; height: 0; border: 4px solid transparent; border-top: 5px solid #222; border-bottom: 0; margin-left: auto; flex: none; }
.caret.grey { border-top-color: #bbb; margin-right: 6px; }

.main { flex: 1; min-height: 0; display: flex; }
.lefttools { width: 31px; flex: none; display: flex; flex-direction: column; align-items: center; padding-top: 8px; border-right: 1px solid #d8d8d8; border-top: 0; background: #f0f0f0; height: 466px; }
.ltool { width: 24px; height: 26.600px; flex: none; padding: 2px 1px; }
.lbox { height: 25px; margin: 1px 0 0.600px; width: 27px; flex: none; display: flex; align-items: center; justify-content: center; border: 1px solid #b5b5b5; border-radius: 3px; background: #ececec; }
.lbox .ltool { height: 24px; }
.lbox.on { border: 2px solid #6e6e6e; background: #dfe3e6; }
.lsep { height: 5.400px; flex: none; width: 24px; border-top: 1px solid #ddd; margin-top: 2.500px; }

.center { width: 611px; flex: none; display: flex; flex-direction: column; height: 466px; }
.hruler { width: 611px; height: 19px; flex: none; display: block; background: #f0f0f0; }
.below { flex: 1; min-height: 0; display: flex; }
.vruler { width: 18px; height: 447px; flex: none; display: block; background: #f0f0f0; }
.canvas { flex: 1; background: #d4d4d4; padding: 36px 0 0 30px; }
.paper { display: block; width: 528px; height: 372px; background: #fff; box-shadow: 2px 3px 0 #8f8f8f; }
.rtext text { font-family: "Liberation Sans", sans-serif; font-size: 10px; fill: #222; letter-spacing: 0; }
.rv text { text-anchor: end; }
.ptitle text { font-family: "DejaVu Sans", sans-serif; font-size: 10.500px; font-weight: bold; text-anchor: middle; fill: #111; letter-spacing: 0; }
.map { filter: url(#wig); }
.map polygon { stroke: #7c6a58; stroke-width: .8; stroke-linejoin: round; }
.c1 { fill: #fef0d9; } .c2 { fill: #fdcc8a; } .c3 { fill: #fc8d59; } .c4 { fill: #e34a33; } .c5 { fill: #b30000; }
.sbtext text { font-family: "Liberation Sans", sans-serif; font-size: 7px; fill: #222; text-anchor: middle; letter-spacing: 0; }
.sbw { fill: #fff; stroke: #222; stroke-width: 1; }
.sbb { fill: #000; stroke: #000; stroke-width: 1; }
.ztext { font-size: 8px; font-weight: bold; text-anchor: middle; fill: #4d5c69; font-family: "Liberation Sans", sans-serif; letter-spacing: 0; }
.ltext { font-size: 12px; text-anchor: middle; fill: #333; font-family: "Liberation Serif", serif; }

.right { flex: 1; min-width: 0; display: flex; flex-direction: column; height: 468px; padding: 0 3px 0 1px; }
.tabs { height: 20px; flex: none; display: flex; align-items: flex-end; padding-left: 2px; border-bottom: 1px solid #c8c8c8; }
.tabs.t2 { height: 19px; margin-top: 4px; }
.tab { height: 16px; display: flex; align-items: center; justify-content: center; background: linear-gradient(#f2f2f2, #dcdcdc); border: 1px solid #bcbcbc; border-bottom: 0; color: #222; }
.tab.on { height: 19px; background: #fafafa; }
.t-items { width: 41px; } .t-hist { width: 96px; padding-bottom: 3px; }
.t2 .tab.on { height: 18px; }
.t-comp { width: 70px; } .t-prop { width: 88px; padding-bottom: 2px; } .t-atlas { width: 87px; }
.dockhead { height: 18px; flex: none; display: flex; align-items: center; justify-content: space-between; padding: 0 3px 0 1px; background: #dbdbdb; }
.dockhead b { font-size: 11px; line-height: 1; font-weight: bold; color: #111; }
.list { height: 113px; flex: none; margin-top: 0; display: flex; border: 1px solid #8d8d8d; background: #fff; }
.list ul { flex: 1; margin: 0; padding: 1.500px 1px 0 3px; list-style: none; }
.list li { height: 13.200px; line-height: 13.200px; padding-left: 0; }
.list li.cur { background: linear-gradient(#f9f9f9, #ececec); }
.vscroll { width: 14px; flex: none; display: flex; flex-direction: column; align-items: center; background: #fafafa; position: relative; height: 100%; }
.up, .dn { width: 0; height: 0; border: 3px solid transparent; flex: none; }
.up { border-bottom: 4px solid #555; border-top: 0; margin-top: 8px; }
.dn { border-top: 4px solid #333; border-bottom: 0; margin-top: auto; margin-bottom: 8px; }
.thumb { width: 12px; height: 28px; margin-top: 54px; flex: none; background: linear-gradient(90deg, #f2f2f2, #d8d8d8); border: 1px solid #a8a8a8; border-radius: 2px; }
.t-prop-thumb { height: 70px; margin-top: 12px; }
.subhead { height: 17px; flex: none; padding-left: 4px; display: flex; align-items: center; font-weight: bold; letter-spacing: 0.1px; background: #c9c9c9; color: #111; }
.propbody { flex: 1; min-height: 0; display: flex; border: 1px solid #8d8d8d; border-top: 0; overflow: hidden; background: #f0f0f0; margin-bottom: 1px; }
.props { flex: 1; padding: 0 10px 0 11px; overflow: hidden; }
.group { border: 1px solid #e2e2e2; padding: 0 9px 0 8px; height: 91px; margin-top: 11px; }
.group.first { border-top: 0; height: 50px; margin-top: 0; padding-top: 1px; }
.group.last { height: 120px; margin-top: 14px; }
.row { display: flex; align-items: center; }
.r-main { height: 17px; margin-bottom: 6px; }
label { flex: none; display: flex; align-items: center; }
.l-short { width: 27px; } .l-mid { width: 86px; } .l-long { width: 167px; }
.combo { flex: 1; height: 100%; display: flex; align-items: center; padding: 0 6px 0 3px; border: 1px solid #707070; border-radius: 2px; background: linear-gradient(#f4f4f4, #e8e8e8 50%, #d4d4d4); }
.input { flex: 1; height: 100%; display: flex; align-items: center; padding: 0 2px 0 3px; background: #fff; border: 1px solid #e4e6ea; }
.legend { width: max-content; margin: -5px 0 0 -8px; padding: 0 4px 0 1px; height: 14px; display: flex; align-items: center; background: #f0f0f0; font-weight: bold; letter-spacing: 0.2px; color: #3c3c3c; }
.tri { width: 0; height: 0; border: 5px solid transparent; border-top: 6px solid #222; border-bottom: 0; margin-right: 7px; }
.u1 { height: 17px; margin-top: 8px; }
.u2 { height: 20px; margin-top: 6px; }
.u3 { height: 18px; margin-top: 5px; }
.s1 { height: 20px; margin-bottom: 6px; }
.s1 .input { padding-left: 2px; }
.s-fixed { margin-top: -1px; }
.legend + .s1 { margin-top: 7px; }
.spin { margin-left: auto; width: 12px; height: 16px; display: flex; flex-direction: column; justify-content: space-between; flex: none; }
.spin i { flex: 1; margin: 0; border: 1px solid #d8d8d8; background: linear-gradient(#fbfbfb, #e4e4e4); display: flex; align-items: center; justify-content: center; }
.spin i::after { content: ""; width: 0; height: 0; border: 2px solid transparent; border-bottom: 2px solid #777; border-top: 0; }
.spin i + i::after { border-bottom: 0; border-top: 2px solid #777; }
.clear { margin-left: auto; margin-right: 8px; width: 10px; height: 10px; background: #9a9a9a; color: #fff; font-size: 8px; line-height: 10px; text-align: center; border-radius: 2px; letter-spacing: 0; }
.clear + .spin { margin-left: 0; }
.radio { width: 11px; height: 11px; border-radius: 50%; border: 1px solid #666; background: radial-gradient(circle, #1d6f96 0 3px, #e6eef3 4px); margin-right: 5px; }

.status { height: 22px; flex: none; display: flex; align-items: center; background: #f0f0f0; position: relative; letter-spacing: -0.1px; }
.status span { flex: none; }
.st-x { width: 95px; padding-left: 1px; } .st-y { width: 93px; } .st-p { width: 94px; }
.zoomcombo { width: 87px; height: 17px; display: flex; align-items: center; padding: 0 6px 0 5px; background: #fff; border: 1px solid #e2e2e2; }
.grip { width: 12px; height: 12px; margin-left: auto; margin-top: 8px; }
.tooltip { position: absolute; left: 28px; top: 330px; width: 94px; height: 17px; padding-left: 5px; line-height: 15px; color: #575757; border: 1px solid #767676; border-radius: 2px; background: linear-gradient(#fff, #e4e5f0); box-shadow: 2px 2px 2px rgba(0,0,0,.35); }
```
